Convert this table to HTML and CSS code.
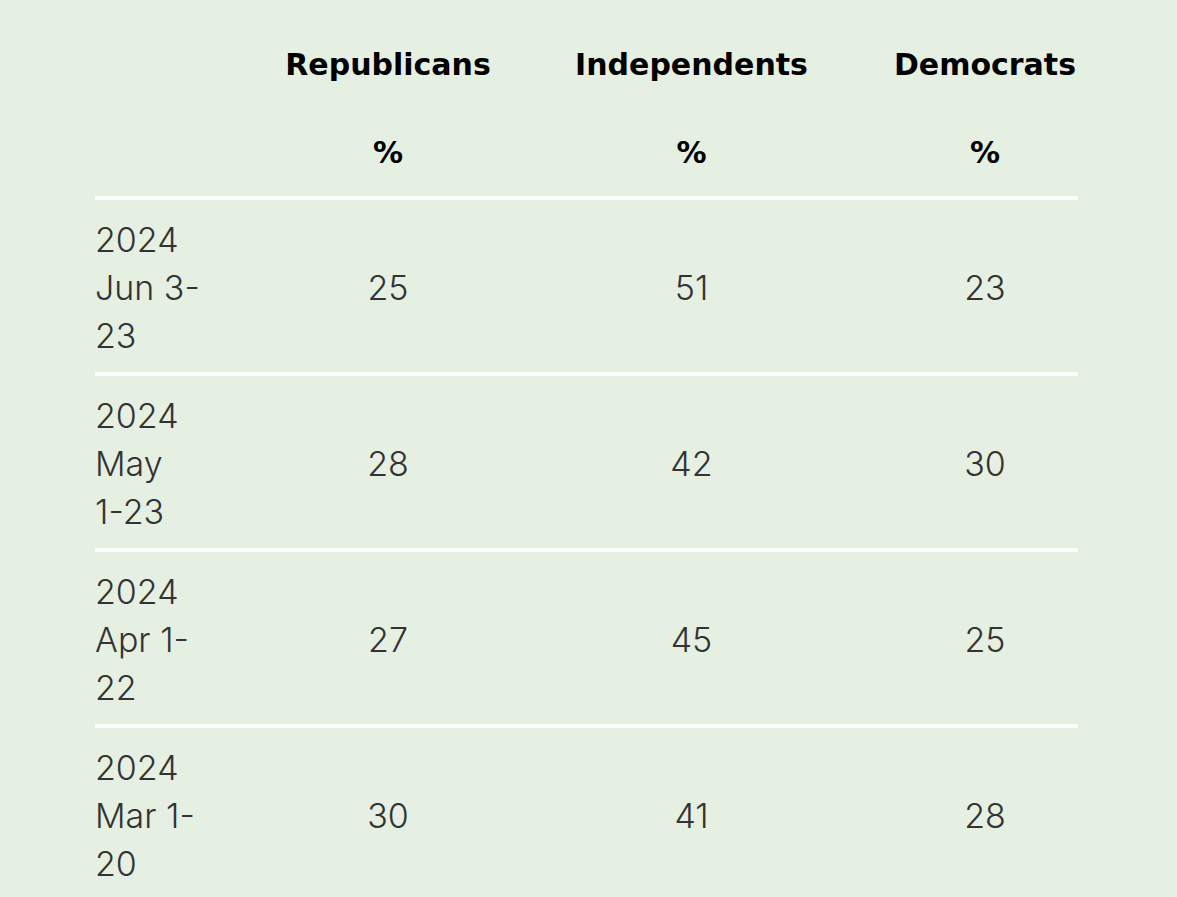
FILE: index.html
```html
<!DOCTYPE html>
<html lang="en">
<head>
<meta charset="utf-8">
<title>Party identification</title>
<link rel="stylesheet" href="styles.css">
</head>
<body>
<div class="page">
  <table class="poll">
    <colgroup>
      <col class="c-date">
      <col class="c-rep">
      <col class="c-ind">
      <col class="c-dem">
    </colgroup>
    <thead>
      <tr class="head-names">
        <th></th>
        <th>Republicans</th>
        <th>Independents</th>
        <th class="last">Democrats</th>
      </tr>
      <tr class="head-units">
        <th></th>
        <th>%</th>
        <th>%</th>
        <th class="last">%</th>
      </tr>
    </thead>
    <tbody>
      <tr>
        <td class="date">2024<br>Jun 3-<br>23</td>
        <td>25</td>
        <td>51</td>
        <td class="last">23</td>
      </tr>
      <tr>
        <td class="date">2024<br>May<br>1-23</td>
        <td>28</td>
        <td>42</td>
        <td class="last">30</td>
      </tr>
      <tr>
        <td class="date">2024<br>Apr 1-<br>22</td>
        <td>27</td>
        <td>45</td>
        <td class="last">25</td>
      </tr>
      <tr>
        <td class="date">2024<br>Mar 1-<br>20</td>
        <td>30</td>
        <td>41</td>
        <td class="last">28</td>
      </tr>
    </tbody>
  </table>
</div>
</body>
</html>
```

FILE: styles.css
```css
html, body {
  margin: 0;
  padding: 0;
  background: #e6f0e2;
}

.page {
  padding: 46px 0 0 95px;
  font-family: Inter, "Liberation Sans", sans-serif;
}

.poll {
  border-collapse: collapse;
  table-layout: fixed;
  width: 983px;
}

.c-date { width: 148px; }
.c-rep { width: 290px; }
.c-ind { width: 317px; }
.c-dem { width: 228px; }

.poll th {
  font-family: "DejaVu Sans", "Liberation Sans", sans-serif;
  font-size: 30px;
  font-weight: 700;
  line-height: 38px;
  color: #000;
  text-align: center;
  padding: 0;
}

.head-names th {
  padding-bottom: 50px;
}

.head-units th {
  padding-bottom: 24px;
}

.poll .last {
  padding-left: 42px;
}

.poll tbody tr {
  border-top: 4px solid #ffffff;
}

.poll td {
  font-size: 34px;
  font-weight: 300;
  line-height: 48px;
  color: #333333;
  text-align: center;
  vertical-align: middle;
  padding: 16px 0 12px;
}

.poll td.date {
  text-align: left;
}
```
